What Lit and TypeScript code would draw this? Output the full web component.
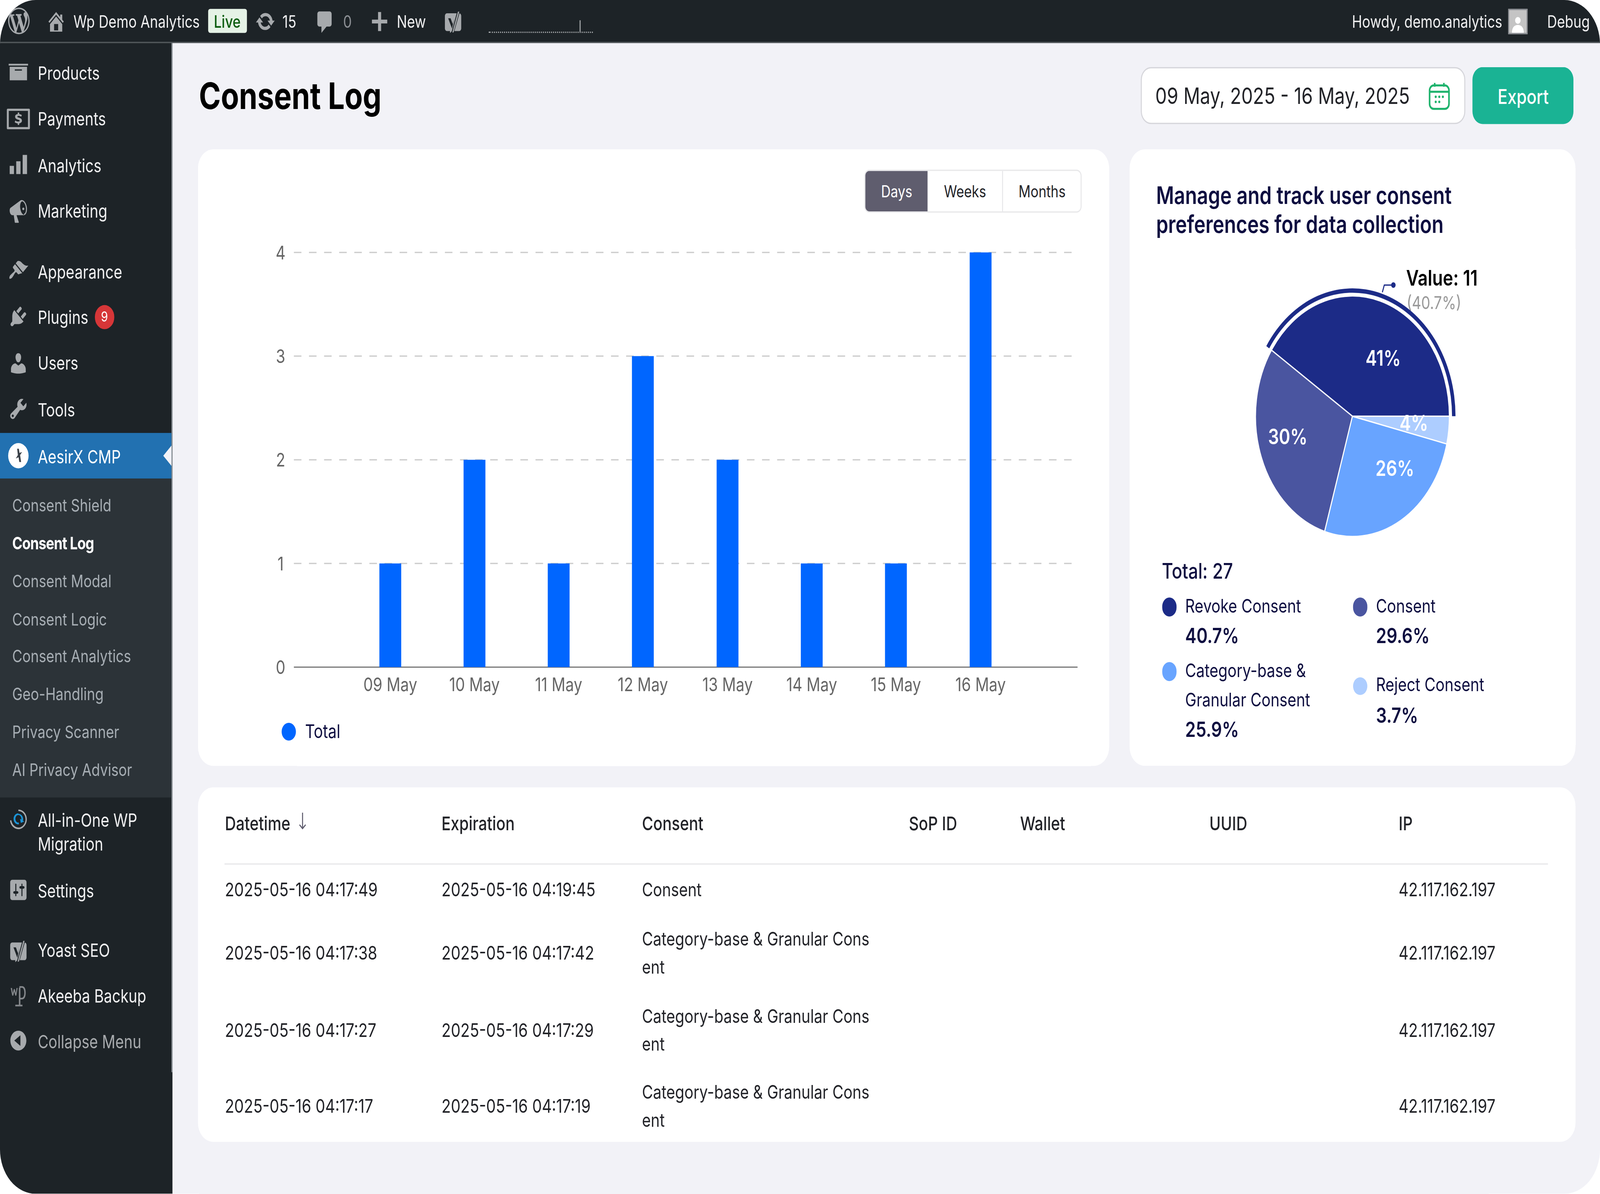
import { LitElement, html, css, svg } from "lit";
import { customElement } from "lit/decorators.js";

const DESIGN_W = 1568;
const DESIGN_H = 943.2;

const ICONS: Record<string, any> = {
  wp: svg`<path d="M20 10c0-5.51-4.49-10-10-10C4.48 0 0 4.49 0 10c0 5.52 4.48 10 10 10 5.51 0 10-4.48 10-10zM7.78 15.37L4.37 6.22c.55-.02 1.17-.08 1.17-.08.5-.06.44-1.13-.06-1.11 0 0-1.45.11-2.37.11-.18 0-.37 0-.58-.01C4.12 2.69 6.87 1.11 10 1.11c2.33 0 4.45.87 6.05 2.34-.68-.11-1.65.39-1.65 1.58 0 .74.45 1.36.9 2.1.35.61.55 1.36.55 2.46 0 1.49-1.4 5-1.4 5l-3.03-8.37c.54-.02.82-.17.82-.17.5-.05.44-1.25-.06-1.22 0 0-1.44.12-2.38.12-.87 0-2.33-.12-2.33-.12-.5-.03-.56 1.2-.06 1.22l.92.08 1.26 3.41zM17.41 10c.24-.64.74-1.87.43-4.25.7 1.29 1.05 2.71 1.05 4.25 0 3.29-1.73 6.24-4.4 7.78.97-2.59 1.94-5.2 2.92-7.78zM6.1 18.09C3.12 16.65 1.11 13.53 1.11 10c0-1.3.23-2.48.72-3.59C3.25 10.3 4.67 14.2 6.1 18.09zm4.03-6.63l2.58 6.98c-.86.29-1.76.45-2.71.45-.79 0-1.57-.11-2.29-.33.81-2.38 1.62-4.74 2.42-7.1z"/>`,
  home: svg`<path d="M16 8.5l1.53 1.53-1.06 1.06L10 4.62l-6.47 6.47-1.06-1.06L10 2.5l4 4v-2h2v4zm-6-2.46l6 5.99V18H4v-5.97zM12 17v-5H8v5h4z"/>`,
  update: svg`<path d="M10.2 3.28c3.53 0 6.43 2.61 6.92 6h2.08l-3.5 4-3.5-4h2.32c-.45-1.97-2.21-3.45-4.32-3.45-1.45 0-2.73.71-3.54 1.78L4.95 5.66C6.23 4.2 8.11 3.28 10.2 3.28zm-.4 13.44c-3.52 0-6.43-2.61-6.92-6H.8l3.5-4c1.17 1.33 2.33 2.67 3.5 4H5.48c.45 1.97 2.21 3.45 4.32 3.45 1.45 0 2.73-.71 3.54-1.78l1.71 1.95c-1.28 1.46-3.15 2.38-5.25 2.38z"/>`,
  comment: svg`<path d="M5 2h10c1.1 0 2 .9 2 2v8c0 1.1-.9 2-2 2h-3l-5 5v-5H5c-1.1 0-2-.9-2-2V4c0-1.1.9-2 2-2z"/>`,
  plus: svg`<path d="M17.5 8.5v3h-6v6h-3v-6h-6v-3h6v-6h3v6h6z"/>`,
  yoast: svg`<path d="M4 3.5h12a2 2 0 0 1 2 2v10a2 2 0 0 1-2 2H9l-2 1.6V17.5H4a2 2 0 0 1-2-2v-10a2 2 0 0 1 2-2z"/><path d="M8 20 14.2 1.5H17L10.4 20z" fill="#1d2327"/><path d="M9.3 18.6 14.8 2.2h1.3l-5.6 16.4z"/><path d="M5.2 7.4h2.4l2 4.6 1.4-4.2-1.2 4.6-.8 3.2z" fill="#1d2327"/>`,
  products: svg`<path d="M.5 3.4h19v1.4H.5zM1.5 5.8h17v10.6h-17zM6.5 7.8v1h7v-1z" fill-rule="evenodd"/>`,
  payments: svg`<path d="M-.5 1.9h21a.8.8 0 0 1 .8.8v14.6a.8.8 0 0 1-.8.8h-21a.8.8 0 0 1-.8-.8V2.700a.8.8 0 0 1 .8-.8zm1.100 1.700v12.800h18.800V3.600z" fill-rule="evenodd"/><path d="M9.400 4.900h1.400v1.200c1.100.1 2 .4 2.600.8l-.6 1.300c-.7-.4-1.600-.7-2.500-.7-.8 0-1.300.3-1.300.6 0 1.100 4.500.5 4.500 3.200 0 1.200-1.100 2-2.700 2.200v1.200H9.400v-1.200c-1.200-.1-2.300-.5-3-1l.6-1.300c.7.5 1.800.8 2.900.8.8 0 1.400-.2 1.400-.7 0-1.100-4.500-.5-4.500-3.200 0-1.200 1.100-1.900 2.600-2z"/>`,
  analytics: svg`<path d="M1.500 11h4.200v6.500H1.500zM7.900 7.400h4.200v10.100H7.900zM14.200 2.400h4.300v15.100h-4.300z"/>`,
  marketing: svg`<path d="M18.15 5.94c.46 1.62.38 3.22-.02 4.48-.42 1.28-1.26 2.18-2.3 2.48-.16.06-.26.06-.4.06-.06.02-.12.02-.18.02-.06.02-.14.02-.22.02h-6.8l2.22 5.5c.02.14-.06.26-.14.34-.08.1-.24.16-.34.16H6.95c-.1 0-.26-.06-.34-.16-.08-.08-.16-.2-.14-.34l-1-5.5H4.25l-.02-.02c-.5.06-1.08-.18-1.54-.62s-.88-1.08-1.06-1.88c-.24-.8-.2-1.56-.02-2.2.18-.62.58-1.08 1.06-1.3l.02-.02 9-5.4c.1-.06.18-.1.24-.16.06-.04.14-.08.24-.12.16-.08.28-.12.5-.18 1.04-.3 2.24.1 3.22 1 .98.88 1.8 2.24 2.26 3.86zm-2.58 5.98h-.02c.4-.1.74-.34 1.04-.7.58-.7.86-1.76.86-3.04-.02-.64-.1-1.3-.28-1.98-.34-1.36-1.02-2.5-1.78-3.24-.38-.38-.8-.64-1.18-.78-.18-.06-.38-.1-.56-.08l-.06.02c-.2.04-.4.12-.58.28-.6.46-1 1.3-1.2 2.32-.18 1.04-.14 2.28.2 3.6.4 1.48 1 2.7 1.78 3.46.38.38.8.64 1.18.78.18.06.4.1.6.06zm-1.7-4.3c.08-.16.2-.32.36-.44.44-.34 1.08-.26 1.42.18.34.44.26 1.08-.18 1.42-.44.34-1.08.26-1.42-.18-.28-.38-.28-.88-.02-1.2z"/>`,
  appearance: svg`<path d="M14.48 11.06L7.41 3.99l1.5-1.5c.5-.56 2.3-.47 3.51.32 1.21.8 1.43 1.28 2.91 2.1 1.18.64 2.45 1.26 4.45.85zm-.71.71L6.7 4.7 4.93 6.47c-.39.39-.39 1.02 0 1.41l1.06 1.06c.39.39.39 1.03 0 1.42-.6.6-1.43 1.11-2.21 1.69-.35.26-.7.53-1.01.84C1.43 13.71.96 15.18 1.27 16.1c.92.31 2.39-.16 3.22-1.53.31-.31.58-.66.84-1.01.58-.78 1.09-1.61 1.69-2.21.39-.39 1.03-.39 1.42 0l1.06 1.06c.39.39 1.02.39 1.41 0z"/>`,
  plugins: svg`<path d="M13.11 4.36L9.87 7.6 8 5.73l3.24-3.24c.35-.34 1.05-.2 1.56.32.52.51.66 1.21.31 1.55zm-8 1.77l.91-1.12 9.01 9.01-1.19.84c-.71.71-2.63 1.16-3.82 1.16H6.14L4.9 17.26c-.59.59-1.54.59-2.12 0-.59-.58-.59-1.53 0-2.12l1.24-1.24v-3.88c0-1.13.4-3.19 1.09-3.89zm7.26 3.97l3.24-3.24c.34-.35 1.04-.21 1.55.31.52.51.66 1.21.31 1.55l-3.24 3.25z"/>`,
  users: svg`<path d="M10 9.25c-2.27 0-2.73-3.44-2.73-3.44C7 4.02 7.82 2 9.97 2c2.16 0 2.98 2.02 2.71 3.81 0 0-.41 3.44-2.68 3.44zm0 2.57L12.72 10c2.39 0 4.52 2.33 4.52 4.53v2.49s-3.65 1.13-7.24 1.13c-3.65 0-7.24-1.13-7.24-1.13v-2.49c0-2.25 1.94-4.48 4.47-4.48z"/>`,
  tools: svg`<path d="M16.68 9.77c-1.34 1.34-3.3 1.67-4.95.99l-5.41 6.52c-.99.99-2.59.99-3.58 0s-.99-2.59 0-3.57l6.52-5.42c-.68-1.65-.35-3.61.99-4.95 1.28-1.28 3.12-1.62 4.72-1.06l-2.89 2.89 2.82 2.82 2.86-2.87c.53 1.58.18 3.39-1.08 4.65zM3.81 16.21c.4.39 1.04.39 1.43 0 .4-.4.4-1.04 0-1.43-.39-.4-1.03-.4-1.43 0-.39.39-.39 1.03 0 1.43z"/>`,
  aesirx: svg`<circle cx="10" cy="10" r="10" fill="#fff"/><path d="M8.800 4.500h1.700l.6 3.300 2.500-.7-1.900 2.400 1 5.500h-1.800l-.7-3.800-2.700 1 2-2.700z" fill="#3a4148"/>`,
  migration: svg`<path d="M10 1.5c4.6 0 8.3 3.4 8.3 7.6s-3.7 7.9-8.3 7.9c-4.2 0-7.7-3-8.2-6.9l1.3-.1c.6 3.2 3.5 5.7 6.9 5.7 3.9 0 7-3 7-6.6S13.9 2.7 10 2.7z" fill="#a7aaad"/><path d="M10 4.900c2.600 0 4.700 1.900 4.700 4.300 0 .4-.1.8-.2 1.200l1.200.6-3.300 1.100-.8-3.300 1.300.6c0-.2 0-.4 0-.6 0-1.700-1.300-3-2.900-3-1.600 0-2.900 1.300-2.900 3 0 1.700 1.300 3 2.900 3h.5v1.400H10c-2.600 0-4.700-1.900-4.700-4.400 0-2.400 2.100-4.300 4.700-4.300z" fill="#1b94d6"/>`,
  settings: svg`<path d="M18 16V4c0-1.1-.9-2-2-2H4c-1.1 0-2 .9-2 2v12c0 1.1.9 2 2 2h12c1.1 0 2-.9 2-2zM8 11h1c.55 0 1 .45 1 1s-.45 1-1 1H8v1.5c0 .28-.22.5-.5.5s-.5-.22-.5-.5V13H6c-.55 0-1-.45-1-1s.45-1 1-1h1V5.5c0-.28.22-.5.5-.5s.5.22.5.5V11zm5-2h-1c-.55 0-1-.45-1-1s.45-1 1-1h1V5.5c0-.28.22-.5.5-.5s.5.22.5.5V7h1c.55 0 1 .45 1 1s-.45 1-1 1h-1v5.5c0 .28-.22.5-.5.5s-.5-.22-.5-.5V9z"/>`,
  akeeba: svg`<path d="M2.5 3.5h1.3l.7 4 1-3.2h1l1 3.2.7-4h1.1L8 9.5H7L6 6.3 5 9.5H4zM11 2h2.6c2.4 0 3.600 2 3.600 5.200s-1.200 5.300-3.600 5.300H12v4.200h2v1.300H7v-1.300h3.500V3.300H11zm1 1.300v7.900h1.500c1.300 0 2.300-1.500 2.300-4s-1-3.900-2.300-3.900z" opacity=".75"/>`,
  collapse: svg`<path fill-rule="evenodd" d="M10 2.16c4.33 0 7.84 3.51 7.84 7.84s-3.51 7.84-7.84 7.84S2.16 14.33 2.16 10C2.17 5.67 5.67 2.16 10 2.16zM12 5.8v8.4L6 10z"/>`,
};

const icon = (name: string) =>
  html`<svg class="ico" viewBox="0 0 20 20" fill="currentColor">${ICONS[name]}</svg>`;

const SUBMENU = ["Consent Shield", "Consent Log", "Consent Modal", "Consent Logic", "Consent Analytics", "Geo-Handling", "Privacy Scanner", "AI Privacy Advisor"];

const BARS = [
  ["09 May", 382.5, 1],
  ["10 May", 465, 2],
  ["11 May", 547.5, 1],
  ["12 May", 630, 3],
  ["13 May", 713, 2],
  ["14 May", 795.5, 1],
  ["15 May", 878, 1],
  ["16 May", 961, 4],
] as const;

const CX = 1325.4;
const CY = 328.8;

function pt(r: number, deg: number) {
  const a = (deg * Math.PI) / 180;
  return `${(CX + r * Math.cos(a)).toFixed(2)} ${(CY - r * Math.sin(a)).toFixed(2)}`;
}

// slices run counter clockwise from 3 o'clock
function slice(r: number, from: number, to: number) {
  const large = to - from > 180 ? 1 : 0;
  return `M${CX} ${CY}L${pt(r, from)}A${r} ${r} 0 ${large} 0 ${pt(r, to)}Z`;
}

function ring(r0: number, r1: number, from: number, to: number) {
  const large = to - from > 180 ? 1 : 0;
  return `M${pt(r1, from)}A${r1} ${r1} 0 ${large} 0 ${pt(r1, to)}L${pt(r0, to)}A${r0} ${r0} 0 ${large} 1 ${pt(r0, from)}Z`;
}

const SLICES = [
  { color: "#1c2b87", pct: 40.74, label: "41%", x: 1355.5, y: 283 },
  { color: "#4a55a0", pct: 29.63, label: "30%", x: 1262, y: 345 },
  { color: "#68a4ff", pct: 25.93, label: "26%", x: 1367, y: 370 },
  { color: "#adcdff", pct: 3.7, label: "4%", x: 1385.6, y: 334 },
];

const ROWS = [
  ["2025-05-16 04:17:49", "2025-05-16 04:19:45", "Consent"],
  ["2025-05-16 04:17:38", "2025-05-16 04:17:42", "Category-base & Granular Consent"],
  ["2025-05-16 04:17:27", "2025-05-16 04:17:29", "Category-base & Granular Consent"],
  ["2025-05-16 04:17:17", "2025-05-16 04:17:19", "Category-base & Granular Consent"],
];

@customElement("app-root")
export class AppRoot extends LitElement {
  static styles = css`
    :host {
      display: block;
      width: 100vw;
      height: 100vh;
      overflow: hidden;
      font-family: Inter, "Liberation Sans", sans-serif;
    }
    .frame {
      width: 1568px;
      height: 943.2px;
      transform-origin: 0 0;
      overflow: hidden;
      border-radius: 35px;
      background: #f2f2f7;
      display: flex;
      flex-direction: column;
    }
    .ico { display: block; width: 20px; height: 20px; flex: none; overflow: visible; }

    /* admin bar */
    .topbar {
      flex: none;
      height: 34px;
      box-sizing: border-box;
      background: #1d2327;
      border-bottom: 0.5px solid #50565a;
      display: flex;
      align-items: center;
      color: #f0f0f1;
      font-size: 13.4px;
      padding-left: 8px;
    }
    .topbar .ico { color: #a7aaad; }
    .topbar .wp { width: 21px; height: 21px; margin-right: 16px; }
    .topbar .home { margin-right: 7px; }
    .live {
      margin-left: 8px;
      height: 19px;
      width: 38px;
      border-radius: 2px;
      background: #e5f2e6;
      color: #0a5c0e;
      font-weight: 500;
      display: flex;
      align-items: center;
      justify-content: center;
    }
    .t8 { margin-left: 8px; }
    .t17 { margin-left: 17px; }
    .t18 { margin-left: 18px; }
    .count { margin-left: 7px; }
    .muted { color: #8c8f94; margin-left: 8px; }
    .sparkline {
      position: relative;
      width: 102px;
      height: 11px;
      margin: 7px 0 0 25px;
      border-bottom: 1px dotted #a7aaad;
      box-sizing: border-box;
    }
    .sparkline i {
      position: absolute;
      left: 89px;
      bottom: 0;
      width: 1px;
      height: 9px;
      background: #a7aaad;
    }
    .spacer { flex: 1; }
    .avatar {
      width: 19px;
      height: 20px;
      margin: 0 19px 0 6px;
      box-sizing: border-box;
      background: #c4c4c4;
      border: 1px solid #8c8f94;
      display: block;
    }
    .debug { margin-right: 10px; }

    .body { flex: 1; display: flex; min-height: 0; }

    /* side menu */
    .sidebar {
      flex: none;
      width: 168.6px;
      background: #1d2327;
      color: #f0f0f1;
      font-size: 14.4px;
    }
    .menu {
      min-height: 813px;
      box-sizing: border-box;
      padding-top: 5.3px;
      border-right: 0.5px solid #8f959a;
    }
    .item {
      position: relative;
      display: flex;
      align-items: center;
      height: 36.4px;
      padding-left: 8px;
      gap: 9px;
    }
    .item .ico { color: #a7aaad; }
    .item.gap { margin-top: 11px; }
    .item.active { background: #2271b1; color: #fff; height: 36px; margin-top: 1px; }
    .item.active::after {
      content: "";
      position: absolute;
      right: 0;
      top: 10px;
      border: 8px solid transparent;
      border-left: 0;
      border-right: 8.5px solid #f2f2f7;
    }
    .item.multi { height: auto; align-items: flex-start; line-height: 19px; padding: 3px 8px 8.5px; }
    .item.dim { color: #a7aaad; height: 34px; }
    .badge {
      width: 19.5px;
      height: 19px;
      margin-left: -3px;
      border-radius: 50%;
      background: #d63638;
      color: #fff;
      font-size: 11px;
      display: flex;
      align-items: center;
      justify-content: center;
    }
    .submenu {
      background: #2c3338;
      padding: 6.7px 0 7px 12px;
      margin-bottom: 5px;
      font-size: 13.6px;
      color: #a7aeb4;
    }
    .submenu div { height: 29.8px; line-height: 29.8px; white-space: nowrap; }
    .submenu .current { color: #fff; font-weight: 700; letter-spacing: -0.35px; }

    /* content */
    .main {
      flex: 1;
      min-width: 0;
      padding: 19px 24px 0 25.4px;
    }
    .head {
      display: flex;
      align-items: center;
      height: 45px;
      margin-bottom: 20px;
      padding-right: 1.8px;
    }
    h1 {
      flex: 1;
      margin: 0 0 0 1px;
      font-size: 29px;
      font-weight: 700;
      color: #000;
    }
    .range {
      width: 318px;
      height: 45px;
      box-sizing: border-box;
      border: 1px solid #d6d6db;
      border-radius: 10px;
      background: #fff;
      display: flex;
      align-items: center;
      padding: 0 14px 0 13px;
      color: #222328;
      font-size: 18px;
      justify-content: space-between;
      white-space: nowrap;
    }
    .range svg { display: block; width: 21px; height: 22px; }
    .export {
      width: 99px;
      height: 45px;
      margin-left: 7px;
      border-radius: 10px;
      background: #1ab394;
      color: #fff;
      font-size: 16px;
      font-weight: 500;
      display: flex;
      align-items: center;
      justify-content: center;
    }
    .cards {
      display: grid;
      grid-template-columns: 893px 437px;
      gap: 20px;
      height: 487px;
    }
    .card { background: #fff; border-radius: 15px; }
    .chart-card { padding-top: 15.8px; display: flex; flex-direction: column; }
    .seg {
      align-self: flex-end;
      margin-right: 26.5px;
      width: 213.5px;
      height: 34.7px;
      box-sizing: border-box;
      border: 1px solid #e8e8ea;
      border-radius: 5px;
      display: grid;
      grid-template-columns: 61.5px 73.5px 1fr;
      font-size: 13px;
      color: #222328;
      overflow: hidden;
    }
    .seg div {
      display: flex;
      align-items: center;
      justify-content: center;
      border-right: 1px solid #e8e8ea;
    }
    .seg div:last-child { border-right: 0; }
    .seg .on { background: #5f5d6e; color: #fff; border-right: 0; }
    .plot { display: block; width: 893px; height: 385px; margin-top: 6.5px; }
    .plot text { font-size: 14.9px; fill: #666; text-anchor: middle; }
    .total {
      display: flex;
      align-items: center;
      gap: 9px;
      padding-left: 81.6px;
      margin-top: 8px;
      font-size: 15px;
      line-height: 20px;
      color: #0e0e40;
    }
    .dot { flex: none; width: 14.4px; height: 14.4px; border-radius: 50%; display: block; }

    .pie-card { padding-top: 24.5px; color: #0e0e40; }
    h2 {
      margin: 0;
      padding-left: 26px;
      font-size: 19px;
      line-height: 23px;
      font-weight: 600;
    }
    .pie { display: block; width: 437px; height: 235px; margin-top: 11.5px; }
    .pie text { font-weight: 600; }
    .pie .pct { font-size: 16.8px; fill: #fff; text-anchor: middle; }
    .pie .val { font-size: 17px; fill: #000; }
    .pie .share { font-size: 14.1px; fill: #999; font-weight: 400; }
    .legend { padding-left: 31.6px; }
    .sum { font-size: 17px; line-height: 24px; margin-top: 3.7px; font-weight: 500; }
    .leg-grid {
      display: grid;
      grid-template-columns: 187px 1fr;
      row-gap: 4.5px;
      align-items: center;
      margin-top: 5.3px;
      font-size: 14.8px;
      line-height: 23.2px;
    }
    .leg { display: flex; gap: 8.5px; }
    .leg .dot { margin-top: 4.5px; }
    .leg strong { display: block; font-size: 16.6px; font-weight: 600; }

    /* log table */
    .table {
      margin-top: 17px;
      height: 280px;
      overflow: hidden;
      padding: 0 27px 0 26.4px;
      color: #222328;
      font-size: 15px;
    }
    .tr {
      display: grid;
      grid-template-columns: 212.3px 196.5px 261.5px 109px 185.5px 185.5px 1fr;
      align-items: center;
      line-height: 22px;
    }
    .th {
      height: 60.5px;
      box-sizing: border-box;
      padding-bottom: 2px;
      border-bottom: 1px solid #e8e8ea;
      font-weight: 500;
    }
    .th span { display: flex; align-items: center; gap: 7px; }
    .th svg { display: block; width: 9px; height: 15px; margin-top: -4px; }
    .td { padding: 8.4px 0; }
    .td.one { padding: 9px 0; }
    .wrap { width: 227px; word-break: break-all; font-size: 14.8px; }
  `;

  private renderMenuItem(name: string, label: string, cls = "") {
    return html`<div class="item ${cls}">${icon(name)}<span>${label}</span></div>`;
  }

  private renderChart() {
    const ticks = [4, 3, 2, 1, 0];
    const yOf = (v: number) => 527 - v * 81.9;
    return html`<svg class="plot" viewBox="194 175 893 385">
      ${ticks.map(
        (t) => svg`
          <text x="275" y=${yOf(t) + 5.4}>${t}</text>
          <line x1="288" x2="1056" y1=${yOf(t)} y2=${yOf(t)}
            stroke=${t ? "#ccc" : "#777"} stroke-width="1"
            stroke-dasharray=${t ? "7.4 7.4" : "none"}></line>`
      )}
      ${BARS.map(
        ([day, x, v]) => svg`
          <rect x=${x - 10.7} y=${yOf(v)} width="21.4" height=${v * 81.9} fill="#0066ff"></rect>
          <text x=${x} y="546">${day}</text>`
      )}
    </svg>`;
  }

  private renderPie() {
    let from = 0;
    const parts = SLICES.map((s) => {
      const to = from + (s.pct * 360) / 100;
      const d = slice(95, from, to);
      from = to;
      return svg`<path d=${d} fill=${s.color} stroke="#fff" stroke-width="1"></path>`;
    });
    return html`<svg class="pie" viewBox="1107 200 437 235">
      <text class="val" x="1378" y="225.5">Value: 11</text>
      <text class="share" x="1378.5" y="244">(40.7%)</text>
      ${parts}
      <path d=${ring(97.6, 101, 0, 146.7)} fill="#1c2b87"></path>
      <path d="M1354.7 230.9 1356.6 225.2H1365" fill="none" stroke="#1c2b87" stroke-width="1"></path>
      <circle cx="1365.5" cy="225.2" r="2.2" fill="#1c2b87"></circle>
      ${SLICES.map((s) => svg`<text class="pct" x=${s.x} y=${s.y + 6}>${s.label}</text>`)}
    </svg>`;
  }

  private renderTable() {
    return html`<div class="card table">
      <div class="tr th">
        <span>Datetime
          <svg viewBox="0 0 9 15"><path d="M4.5 1v12.5M1.5 10.5l3 3 3-3" fill="none" stroke="#5f5d6e" stroke-width="1"></path></svg>
        </span>
        <span>Expiration</span><span>Consent</span><span>SoP ID</span><span>Wallet</span><span>UUID</span><span>IP</span>
      </div>
      ${ROWS.map(
        ([dt, exp, consent]) => html`<div class="tr td ${consent === "Consent" ? "one" : ""}">
          <span>${dt}</span><span>${exp}</span><span class="wrap">${consent}</span>
          <span></span><span></span><span></span><span>42.117.162.197</span>
        </div>`
      )}
    </div>`;
  }

  render() {
    // the window is not always the size we ask for, so fit the design to what we got
    const fit = `transform: scale(${window.innerWidth / DESIGN_W}, ${window.innerHeight / DESIGN_H})`;
    return html`<div class="frame" style=${fit}>
      <div class="topbar">
        <svg class="ico wp" viewBox="0 0 20 20" fill="currentColor">${ICONS.wp}</svg>
        <svg class="ico home" viewBox="0 0 20 20" fill="currentColor">${ICONS.home}</svg>
        <span>Wp Demo Analytics</span>
        <span class="live">Live</span>
        <span class="t8">${icon("update")}</span><span class="count">15</span>
        <span class="t18">${icon("comment")}</span><span class="muted">0</span>
        <span class="t17">${icon("plus")}</span><span class="count">New</span>
        <span class="t17">${icon("yoast")}</span>
        <div class="sparkline"><i></i></div>
        <div class="spacer"></div>
        <span>Howdy, demo.analytics</span>
        <svg class="avatar" viewBox="0 0 19 20"><circle cx="9.5" cy="9" r="3" fill="#fff"></circle><path d="M3 20c0-5 3-7 6.5-7s6.5 2 6.5 7z" fill="#fff"></path></svg>
        <span class="debug">Debug</span>
      </div>
      <div class="body">
        <div class="sidebar">
          <div class="menu">
            ${this.renderMenuItem("products", "Products")}
            ${this.renderMenuItem("payments", "Payments")}
            ${this.renderMenuItem("analytics", "Analytics")}
            ${this.renderMenuItem("marketing", "Marketing")}
            ${this.renderMenuItem("appearance", "Appearance", "gap")}
            <div class="item">${icon("plugins")}<span>Plugins</span><span class="badge">9</span></div>
            ${this.renderMenuItem("users", "Users")}
            ${this.renderMenuItem("tools", "Tools")}
            ${this.renderMenuItem("aesirx", "AesirX CMP", "active")}
            <div class="submenu">
              ${SUBMENU.map((s) => html`<div class=${s === "Consent Log" ? "current" : ""}>${s}</div>`)}
            </div>
            <div class="item multi">${icon("migration")}<span>All-in-One WP<br />Migration</span></div>
            ${this.renderMenuItem("settings", "Settings")}
            ${this.renderMenuItem("yoast", "Yoast SEO", "gap")}
            ${this.renderMenuItem("akeeba", "Akeeba Backup")}
            ${this.renderMenuItem("collapse", "Collapse Menu", "dim")}
          </div>
        </div>
        <div class="main">
          <div class="head">
            <h1>Consent Log</h1>
            <div class="range">
              <span>09 May, 2025 - 16 May, 2025</span>
              <svg viewBox="0 0 21 22" fill="none" stroke="#1fb36d" stroke-width="1.6">
                <rect x="1" y="2.5" width="19" height="18.5" rx="4"></rect>
                <path d="M1 7.5h19M6 .5v3M15 .5v3"></path>
                <path d="M7 11.5h.01M10.5 11.5h.01M14 11.5h.01M7 15.5h.01M10.5 15.5h.01" stroke-width="2" stroke-linecap="round"></path>
              </svg>
            </div>
            <div class="export">Export</div>
          </div>
          <div class="cards">
            <div class="card chart-card">
              <div class="seg"><div class="on">Days</div><div>Weeks</div><div>Months</div></div>
              ${this.renderChart()}
              <div class="total"><i class="dot" style="background:#0066ff"></i>Total</div>
            </div>
            <div class="card pie-card">
              <h2>Manage and track user consent<br />preferences for data collection</h2>
              ${this.renderPie()}
              <div class="legend">
                <div class="sum">Total: 27</div>
                <div class="leg-grid">
                  <div class="leg"><i class="dot" style="background:#1c2b87"></i><div>Revoke Consent<strong>40.7%</strong></div></div>
                  <div class="leg"><i class="dot" style="background:#4a55a0"></i><div>Consent<strong>29.6%</strong></div></div>
                  <div class="leg"><i class="dot" style="background:#68a4ff"></i><div>Category-base &amp;<br />Granular Consent<strong>25.9%</strong></div></div>
                  <div class="leg"><i class="dot" style="background:#adcdff"></i><div>Reject Consent<strong>3.7%</strong></div></div>
                </div>
              </div>
            </div>
          </div>
          ${this.renderTable()}
        </div>
      </div>
    </div>`;
  }
}
